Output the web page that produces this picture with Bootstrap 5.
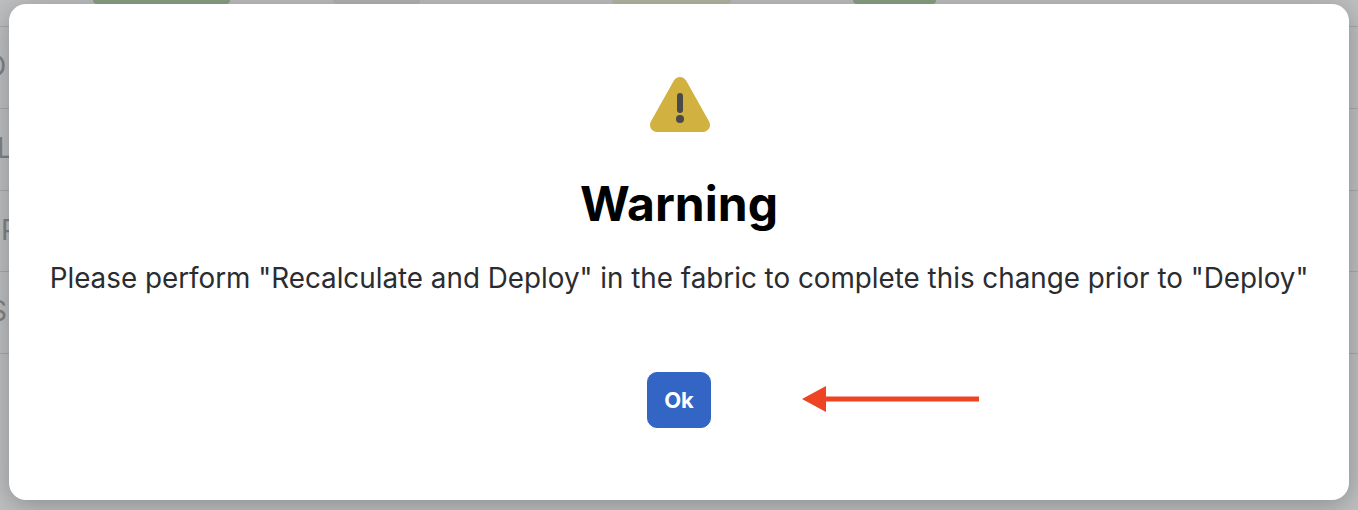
<!DOCTYPE html>
<html lang="en">
<head>
<meta charset="utf-8">
<title>Warning</title>
<link href="https://cdn.jsdelivr.net/npm/bootstrap@5.3.0/dist/css/bootstrap.min.css" rel="stylesheet">
<style>
html,body{height:510px;overflow:hidden}
body{background:#bfc0c2;font-family:Inter,"Liberation Sans",sans-serif;position:relative}
.under-pills{height:26px;padding-left:93px}
.under-pill{height:4px;border-radius:0 0 30px 30px;flex:none}
.pill-a{width:137px;background:#8ba283;margin-right:103px}
.pill-b{width:87px;background:#b4b5b7;margin-right:192px}
.pill-c{width:119px;background:#b8b8a6;margin-right:122px}
.pill-d{width:83px;background:#8ba283}
.under-row{height:81.75px;border-top:1px solid #a9aaac;color:#828385;font-size:28px;line-height:79px;white-space:nowrap;overflow:hidden}
.under-row span{display:block;margin-left:-14px}
.under-row.row-l span{margin-left:-3px}
.under-row.row-p span{margin-left:1px}
.under-row.row-s span{margin-left:-11px}
.under-row:last-child{height:1px}
.warn-dialog{position:absolute;left:9px;top:4px;width:1340px;height:496px;background:#fff;border-radius:17px;box-shadow:0 5px 28px rgba(0,0,0,.28);padding-top:72px}
.warn-icon{display:block;width:62px;height:60px;margin-left:1px}
.warn-title{font-size:48px;font-weight:700;line-height:58px;color:#000;margin:39px 0 0}
.warn-text{font-size:27.8px;line-height:32px;color:#2a2c30;margin:29px 0 0;white-space:nowrap}
.warn-btn{width:64px;height:56px;margin-top:78px;background:#3366c4;border-color:#3366c4;border-radius:10px;font-weight:700;font-size:22px;line-height:1;padding:0;color:#fff}
.warn-arrow{position:absolute;left:793px;top:381px;width:177px;height:28px}
</style>
</head>
<body>
<div class="d-flex under-pills">
  <div class="under-pill pill-a"></div>
  <div class="under-pill pill-b"></div>
  <div class="under-pill pill-c"></div>
  <div class="under-pill pill-d"></div>
</div>
<div class="under-row"><span>D</span></div>
<div class="under-row row-l"><span>L</span></div>
<div class="under-row row-p"><span>P</span></div>
<div class="under-row row-s"><span>S</span></div>
<div class="under-row"></div>

<div class="warn-dialog d-flex flex-column align-items-center text-center" role="dialog">
  <svg class="warn-icon" viewBox="0 0 62 60" aria-hidden="true">
    <path d="M31 8 L54 49 H8 Z" fill="#d1b13f" stroke="#d1b13f" stroke-width="14" stroke-linejoin="round"/>
    <rect x="28" y="17" width="6" height="20" rx="3" fill="#4a4a4a"/>
    <circle cx="31" cy="43" r="4" fill="#4a4a4a"/>
  </svg>
  <h2 class="warn-title">Warning</h2>
  <p class="warn-text">Please perform "Recalculate and Deploy" in the fabric to complete this change prior to "Deploy"</p>
  <button type="button" class="btn btn-primary warn-btn">Ok</button>
  <svg class="warn-arrow" viewBox="0 0 177 28" aria-hidden="true">
    <path d="M0 14 L24 1 V11.5 H177 V16.5 H24 V27 Z" fill="#ee4423"/>
  </svg>
</div>
<script src="https://cdn.jsdelivr.net/npm/bootstrap@5.3.0/dist/js/bootstrap.bundle.min.js"></script>
</body>
</html>
